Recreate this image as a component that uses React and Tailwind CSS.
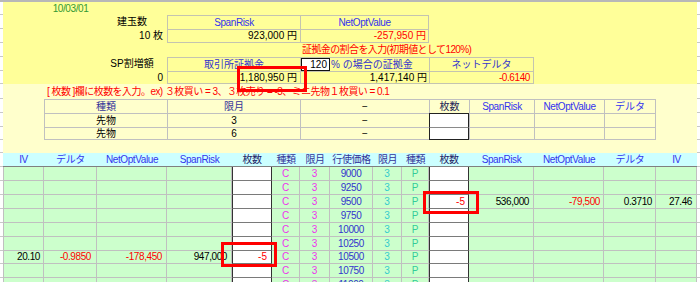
import React from "react";

const G =
  "grid grid-cols-[3px_41px_53px_70px_65px_40px_28px_30px_43px_29px_27px_40px_65px_70px_52px_41px_3px]";
const Y = "bg-[#ffff99]";
const LY = "bg-[#ffffcc]";
const BOX = "border-[#c4c4b0]";
const T = "tracking-[-0.4px]";

const strikes = [
  "9000", "9250", "9500", "9750", "10000", "10250", "10500", "10750", "11000",
];
const heights = [
  "h-[14px]", "h-[14px]", "h-[14px]", "h-[14px]", "h-[14px]",
  "h-[14px]", "h-[13px]", "h-[14px]", "h-[14px]",
];

// 左側の建玉（コール）と右側の建玉（プット）
const callPos = { 6: { iv: "20.10", delta: "-0.9850", nov: "-178,450", sr: "947,000", qty: "-5" } };
const putPos = { 2: { qty: "-5", sr: "536,000", nov: "-79,500", delta: "0.3710", iv: "27.46" } };

function Edge() {
  return <div className="bg-white border-b border-[#c8c8c8]" />;
}

function Cell({ className = "", children }) {
  return (
    <div className={`flex items-center whitespace-nowrap overflow-visible ${className}`}>
      {children}
    </div>
  );
}

function GreenRow({ i }) {
  const c = callPos[i] || {};
  const p = putPos[i] || {};
  const g = "bg-[#ccffcc] border-r border-b border-[#c0c0c0]";
  const box = "bg-white border-x border-[#333333] border-b border-b-[#7a7a7a]";
  return (
    <div className={`${G} ${heights[i]}`}>
      <Edge />
      <Cell className={`${g} border-l justify-end pr-[3px] ${T}`}>{c.iv}</Cell>
      <Cell className={`${g} justify-end pr-[5px] text-[#ff0000] ${T}`}>{c.delta}</Cell>
      <Cell className={`${g} justify-end pr-[4px] text-[#ff0000] ${T}`}>{c.nov}</Cell>
      <Cell className={`${g} justify-end pr-[4px] ${T}`}>{c.sr}</Cell>
      <Cell className={`${box} justify-end pr-[4px] text-[#ff0000]`}>{c.qty}</Cell>
      <Cell className={`${g} justify-center text-[#ee33ee]`}>C</Cell>
      <Cell className={`${g} justify-center text-[#ee33ee]`}>3</Cell>
      <Cell className={`${g} justify-center text-[#3333cc] ${T}`}>{strikes[i]}</Cell>
      <Cell className={`${g} justify-center text-[#33cccc]`}>3</Cell>
      <Cell className={`${g} justify-center text-[#33cc99]`}>P</Cell>
      <Cell className={`${box} justify-end pr-[3px] text-[#ff0000]`}>{p.qty}</Cell>
      <Cell className={`${g} justify-end pr-[4px] ${T}`}>{p.sr}</Cell>
      <Cell className={`${g} justify-end pr-[3px] text-[#ff0000] ${T}`}>{p.nov}</Cell>
      <Cell className={`${g} justify-end pr-[3px] ${T}`}>{p.delta}</Cell>
      <Cell className={`${g} justify-end pr-[4px] ${T}`}>{p.iv}</Cell>
      <Edge />
    </div>
  );
}

function FutRow({ kind, month, last }) {
  const td = `${LY} border-t border-l border-[#c0c0c0] ${last ? "border-b" : ""}`;
  return (
    <div className={`${G} ${last ? "h-[13px]" : "h-[14px]"}`}>
      <Edge />
      <div className={LY} />
      <Cell className={`${td} col-span-2 justify-center`}>{kind}</Cell>
      <Cell className={`${td} col-span-3 justify-center`}>{month}</Cell>
      <Cell className={`${td} col-span-4 justify-center`}>−</Cell>
      <div
        className={`bg-white border-x border-[#222222] ${
          last ? "border-t border-t-[#8a8a8a] border-b border-b-[#222222]" : "border-t border-t-[#222222]"
        }`}
      />
      <div className={td} />
      <div className={td} />
      <div className={`${td} border-r`} />
      <div className={LY} />
      <Edge />
    </div>
  );
}

export default function App() {
  return (
    <div className="relative w-[700px] h-[282px] overflow-hidden bg-white text-[10px] leading-none text-black font-['Liberation_Sans','Noto_Sans_CJK_JP',sans-serif]">
      <div className="h-[2px] bg-[#b8b8b8]" />

      {/* 日付 */}
      <div className={`${G} h-[13px]`}>
        <Edge />
        <div className={Y} />
        <Cell className={`${Y} justify-center text-[#339933] ${T}`}>10/03/01</Cell>
        <div className={`${Y} col-span-13`} />
        <Edge />
      </div>

      {/* 建玉数 */}
      <div className={`${G} h-[14px]`}>
        <Edge />
        <div className={`${Y} col-span-2`} />
        <Cell className={`${Y} justify-center`}>建玉数</Cell>
        <Cell className={`${Y} col-span-3 justify-center border-t border-l ${BOX} text-[#3333ee] ${T}`}>SpanRisk</Cell>
        <Cell className={`${Y} col-span-4 justify-center border-t border-x ${BOX} text-[#3333ee] ${T}`}>NetOptValue</Cell>
        <div className={`${Y} col-span-5`} />
        <Edge />
      </div>
      <div className={`${G} h-[14px]`}>
        <Edge />
        <div className={`${Y} col-span-2`} />
        <Cell className={`${Y} justify-end pr-[4px]`}>10 枚</Cell>
        <Cell className={`${Y} col-span-3 justify-end pr-[3px] border-y border-l ${BOX}`}>923,000 円</Cell>
        <Cell className={`${Y} col-span-4 justify-end pr-[2px] border ${BOX} text-[#ff0000]`}>-257,950 円</Cell>
        <div className={`${Y} col-span-5`} />
        <Edge />
      </div>

      {/* 証拠金の割合 */}
      <div className={`${G} h-[14px]`}>
        <Edge />
        <div className={`${Y} col-span-6`} />
        <Cell className={`${Y} col-span-9 pl-[2px] text-[#ff0000] tracking-[-0.6px]`}>
          証拠金の割合を入力(初期値として120%)
        </Cell>
        <Edge />
      </div>
      <div className={`${G} h-[14px]`}>
        <Edge />
        <div className={`${Y} col-span-2`} />
        <Cell className={`${Y} justify-center`}>SP割増額</Cell>
        <Cell className={`${Y} col-span-3 justify-center border-t border-l ${BOX} text-[#3333cc]`}>取引所証拠金</Cell>
        <Cell className={`${Y} col-span-4 border-t border-l ${BOX}`}>
          <div className="w-[29px] h-full flex items-center justify-end pr-[2px] bg-white border border-[#111111]">
            120
          </div>
          <span className="text-[#3333cc] pl-[1px]">% の場合の証拠金</span>
        </Cell>
        <Cell className={`${Y} col-span-2 justify-center border-t border-x ${BOX} text-[#3333cc]`}>ネットデルタ</Cell>
        <div className={`${Y} col-span-3`} />
        <Edge />
      </div>
      <div className={`${G} h-[13px]`}>
        <Edge />
        <div className={`${Y} col-span-2`} />
        <Cell className={`${Y} justify-end pr-[4px]`}>0</Cell>
        <Cell className={`${Y} col-span-3 justify-end pr-[3px] border-y border-l ${BOX}`}>1,180,950 円</Cell>
        <Cell className={`${Y} col-span-4 justify-end pr-[2px] border-y border-l ${BOX}`}>1,417,140 円</Cell>
        <Cell className={`${Y} col-span-2 justify-end pr-[3px] border ${BOX} text-[#ff0000] ${T}`}>-0.6140</Cell>
        <div className={`${Y} col-span-3`} />
        <Edge />
      </div>

      {/* 説明 */}
      <div className={`${G} h-[15px]`}>
        <Edge />
        <Cell className={`${LY} col-span-15 pl-[44px] text-[#ff0000] tracking-[-0.55px]`}>
          [ 枚数 ]欄に枚数を入力。ex) ３枚買い = 3、３枚売り = -3、ミニ先物１枚買い = 0.1
        </Cell>
        <Edge />
      </div>

      {/* 先物 */}
      <div className={`${G} h-[14px]`}>
        <Edge />
        <div className={LY} />
        <Cell className={`${LY} col-span-2 justify-center border-t border-l border-[#c0c0c0] text-[#333399]`}>種類</Cell>
        <Cell className={`${LY} col-span-3 justify-center border-t border-l border-[#c0c0c0] text-[#333399]`}>限月</Cell>
        <Cell className={`${LY} col-span-4 justify-center border-t border-l border-[#c0c0c0]`}>−</Cell>
        <Cell className={`${LY} justify-center border-t border-l border-[#c0c0c0] text-[#222255]`}>枚数</Cell>
        <Cell className={`${LY} justify-center border-t border-l border-[#c0c0c0] text-[#3333ee] ${T}`}>SpanRisk</Cell>
        <Cell className={`${LY} justify-center border-t border-l border-[#c0c0c0] text-[#3333ee] ${T}`}>NetOptValue</Cell>
        <Cell className={`${LY} justify-center border-t border-x border-[#c0c0c0] text-[#3333ee]`}>デルタ</Cell>
        <div className={LY} />
        <Edge />
      </div>
      <FutRow kind="先物" month="3" />
      <FutRow kind="先物" month="6" last />
      <div className={`${G} h-[13px]`}>
        <Edge />
        <div className={`${LY} col-span-15`} />
        <Edge />
      </div>

      {/* オプション見出し */}
      <div className={`${G} h-[14px]`}>
        <Edge />
        {[
          ["IV", "text-[#3333ee]"],
          ["デルタ", "text-[#3333ee]"],
          ["NetOptValue", "text-[#3333ee]"],
          ["SpanRisk", "text-[#3333ee]"],
          ["枚数", "text-[#222266]"],
          ["種類", "text-[#333399]"],
          ["限月", "text-[#333399]"],
          ["行使価格", "text-[#333399]"],
          ["限月", "text-[#333399]"],
          ["種類", "text-[#333399]"],
          ["枚数", "text-[#222266]"],
          ["SpanRisk", "text-[#3333ee]"],
          ["NetOptValue", "text-[#3333ee]"],
          ["デルタ", "text-[#3333ee]"],
          ["IV", "text-[#3333ee]"],
        ].map(([label, color], k) => (
          <Cell
            key={k}
            className={`bg-[#ccffff] border-b border-[#808080] justify-center ${T} ${color}`}
          >
            {label}
          </Cell>
        ))}
        <Edge />
      </div>

      {strikes.map((s, i) => (
        <GreenRow key={s} i={i} />
      ))}

      {/* 赤枠 */}
      <div className="absolute left-[237px] top-[66px] w-[70px] h-[26px] border-[3px] border-[#ff0000]" />
      <div className="absolute left-[221px] top-[242px] w-[56px] h-[25px] border-[3px] border-[#ff0000]" />
      <div className="absolute left-[423px] top-[191px] w-[56px] h-[23px] border-[3px] border-[#ff0000]" />
    </div>
  );
}
